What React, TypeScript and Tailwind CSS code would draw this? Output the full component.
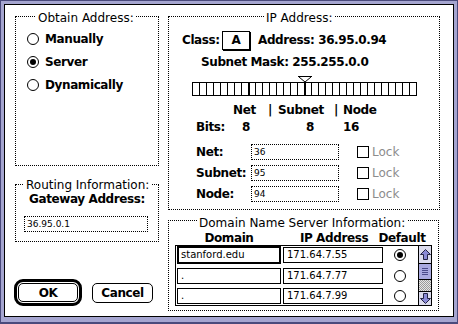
import React from "react";

const Radio = ({ checked }: { checked?: boolean }) => (
  <span className="flex h-[12px] w-[12px] shrink-0 items-center justify-center rounded-full border border-black bg-white">
    {checked && <span className="block h-[6px] w-[6px] rounded-full bg-black" />}
  </span>
);

const Check = () => <span className="block h-[12px] w-[12px] shrink-0 border border-black bg-white" />;

const Arrow = ({ down }: { down?: boolean }) => (
  <svg width="11" height="11" viewBox="0 0 11 11" className={down ? "block rotate-180" : "block"}>
    <path d="M5.5 0.5 L10.5 5.5 L7.5 5.5 L7.5 10.5 L3.5 10.5 L3.5 5.5 L0.5 5.5 Z" fill="#8a8ad6" stroke="#222244" strokeWidth="1" />
  </svg>
);

const Slider = () => {
  const lines = [];
  for (let k = 1; k < 32; k++) {
    if (k === 8 || k === 16) {
      lines.push(<rect key={k} x={7 * k} y={6} width={2} height={14} fill="black" />);
    } else {
      lines.push(<line key={k} x1={7 * k + 0.5} y1={6} x2={7 * k + 0.5} y2={20} stroke="black" strokeWidth={1} />);
    }
  }
  return (
    <svg width="226" height="20" className="block" shapeRendering="crispEdges">
      <line x1="106" y1="0.5" x2="120" y2="0.5" stroke="black" />
      <path d="M107 1 L113 6 L119 1" stroke="black" fill="none" shapeRendering="auto" />
      <rect x="0.5" y="6.5" width="224" height="13" fill="white" stroke="black" />
      {lines}
    </svg>
  );
};

const B = "text-[12px] font-bold leading-[14px] tracking-[-0.4px]";

export default function App() {
  return (
    <div className="h-[324px] w-[458px] border border-b-2 border-[#4a4a7c] bg-[#a5a5d0] pb-[5px] pl-[3px] pr-[3px] pt-[3px] text-black [font-family:'DejaVu_Sans',sans-serif]">
      <div className="flex h-full gap-[9px] border border-black bg-white pl-[10px] pt-[11px]">
        {/* Left column */}
        <div className="flex w-[144px] flex-col">
          <div className="relative h-[150px] border border-dotted border-black">
            <span className="absolute left-[20px] top-[-6px] whitespace-nowrap bg-white px-[2px] text-[12px] leading-[14px]">
              Obtain Address:
            </span>
            <div className="flex flex-col pl-[11px] pt-[10px] text-[12px] font-bold leading-[14px] tracking-[-0.4px]">
              <div className="flex h-[23px] items-center gap-[6px]">
                <Radio />
                <span>Manually</span>
              </div>
              <div className="flex h-[23px] items-center gap-[6px]">
                <Radio checked />
                <span>Server</span>
              </div>
              <div className="flex h-[23px] items-center gap-[6px]">
                <Radio />
                <span>Dynamically</span>
              </div>
            </div>
          </div>

          <div className="relative mt-[18px] h-[58px] border border-dotted border-black">
            <span className="absolute left-[8px] top-[-7px] whitespace-nowrap bg-white px-[2px] text-[12px] leading-[14px]">
              Routing Information:
            </span>
            <div className={"pt-[7px] text-center " + B}>Gateway Address:</div>
            <div className="ml-[8px] mt-[10px] h-[16px] w-[124px] border border-dotted border-black pl-[2px] pt-[1px] text-[9px] leading-[12px]">
              36.95.0.1
            </div>
          </div>

          <div className="-ml-[1px] mt-[37px] flex items-center gap-[10px] text-[12px] font-bold tracking-[-0.4px]">
            <div className="h-[27px] w-[68px] rounded-[9px] border-[3px] border-black p-[1px]">
              <div className="flex h-full w-full items-center justify-center rounded-[5px] border border-black">OK</div>
            </div>
            <div className="flex h-[20px] w-[61px] items-center justify-center rounded-[5px] border border-black">Cancel</div>
          </div>
        </div>

        {/* Right column */}
        <div className="flex w-[272px] flex-col">
          <div className={"relative h-[194px] border border-dotted border-black " + B}>
            <span className="absolute left-[95px] top-[-6px] whitespace-nowrap bg-white px-[2px] text-[12px] font-normal leading-[14px] tracking-normal">
              IP Address:
            </span>
            <div className="mt-[13px] flex h-[20px] items-center pl-[13px]">
              <span className="w-[40px]">Class:</span>
              <span className="flex h-[19px] w-[28px] items-center justify-center border border-black shadow-[1px_1px_0_0_#000]">A</span>
              <span className="ml-[8px]">Address: 36.95.0.94</span>
            </div>
            <div className="mt-[5px] pl-[32px]">Subnet Mask: 255.255.0.0</div>
            <div className="mt-[7px] pl-[23px]">
              <Slider />
            </div>
            <div className="mt-[7px] flex pl-[64px]">
              <span className="w-[35px]">Net</span>
              <span className="w-[10px]">|</span>
              <span className="w-[56px]">Subnet</span>
              <span className="w-[9px]">|</span>
              <span>Node</span>
            </div>
            <div className="mt-[3px] flex pl-[27px]">
              <span className="w-[46px]">Bits:</span>
              <span className="w-[64px]">8</span>
              <span className="w-[37px]">8</span>
              <span>16</span>
            </div>
            <div className="mt-[10px] flex flex-col gap-[5px]">
              {[
                ["Net:", "36"],
                ["Subnet:", "95"],
                ["Node:", "94"],
              ].map(([l, v]) => (
                <div key={l} className="flex h-[16px] items-center pl-[27px]">
                  <span className="w-[55px]">{l}</span>
                  <span className="h-[16px] w-[88px] border border-dotted border-black pl-[2px] pt-[1px] text-[9px] font-normal leading-[12px] tracking-normal">
                    {v}
                  </span>
                  <span className="ml-[18px]">
                    <Check />
                  </span>
                  <span className="ml-[3px] text-[12px] font-normal tracking-normal text-[#8c8c8c]">Lock</span>
                </div>
              ))}
            </div>
          </div>

          <div className="relative mt-[10px] h-[91px] w-[271px] border border-dotted border-black">
            <span className="absolute left-[28px] top-[-5px] whitespace-nowrap bg-white px-[2px] text-[12px] leading-[14px]">
              Domain Name Server Information:
            </span>
            <div className={"mt-[10px] flex h-[14px] pl-[8px] " + B}>
              <span className="flex w-[104px] justify-center whitespace-nowrap">Domain</span>
              <span className="w-[3px]" />
              <span className="flex w-[100px] justify-center whitespace-nowrap">IP Address</span>
              <span className="flex w-[36px] justify-center whitespace-nowrap">Default</span>
            </div>
            <div className="ml-[6px] flex">
              <div className="h-[61px] w-[243px] border-b border-l border-t border-black text-[10px] leading-[14px]">
                <div className="flex h-[21px] items-start pl-[1px]">
                  <div className="h-[18px] w-[104px] border-2 border-black pl-[2px]">stanford.edu</div>
                  <div className="ml-[2px] mt-[1px] h-[16px] w-[100px] border border-black pl-[3px] leading-[14px]">171.64.7.55</div>
                  <div className="ml-[11px] mt-[3px]">
                    <Radio checked />
                  </div>
                </div>
                <div className="flex h-[20px] items-start pl-[1px]">
                  <div className="mt-[1px] h-[16px] w-[104px] border border-black pl-[3px]">.</div>
                  <div className="ml-[2px] mt-[1px] h-[16px] w-[100px] border border-black pl-[3px]">171.64.7.77</div>
                  <div className="ml-[11px] mt-[3px]">
                    <Radio />
                  </div>
                </div>
                <div className="flex h-[18px] items-start pl-[1px]">
                  <div className="mt-[1px] h-[16px] w-[104px] border border-black pl-[3px]">.</div>
                  <div className="ml-[2px] mt-[1px] h-[16px] w-[100px] border border-black pl-[3px]">171.64.7.99</div>
                  <div className="ml-[11px] mt-[3px]">
                    <Radio />
                  </div>
                </div>
              </div>
              <div className="flex h-[61px] w-[14px] flex-col border border-black">
                <div className="flex h-[18px] items-center justify-center border-b border-black bg-[#dcdcee]">
                  <Arrow />
                </div>
                <div className="flex h-[16px] flex-col items-center justify-center gap-[1px] border-b border-black bg-[#a9a9e0]">
                  <span className="block h-px w-[6px] bg-[#4a4a8a]" />
                  <span className="block h-px w-[6px] bg-[#4a4a8a]" />
                  <span className="block h-px w-[6px] bg-[#4a4a8a]" />
                  <span className="block h-px w-[6px] bg-[#4a4a8a]" />
                </div>
                <div className="h-[11px] bg-[repeating-conic-gradient(#9a9a9a_0_25%,#e6e6e6_0_50%)] bg-[length:2px_2px]" />
                <div className="flex flex-1 items-center justify-center border-t border-black bg-[#dcdcee]">
                  <Arrow down />
                </div>
              </div>
            </div>
          </div>
        </div>
      </div>
    </div>
  );
}
